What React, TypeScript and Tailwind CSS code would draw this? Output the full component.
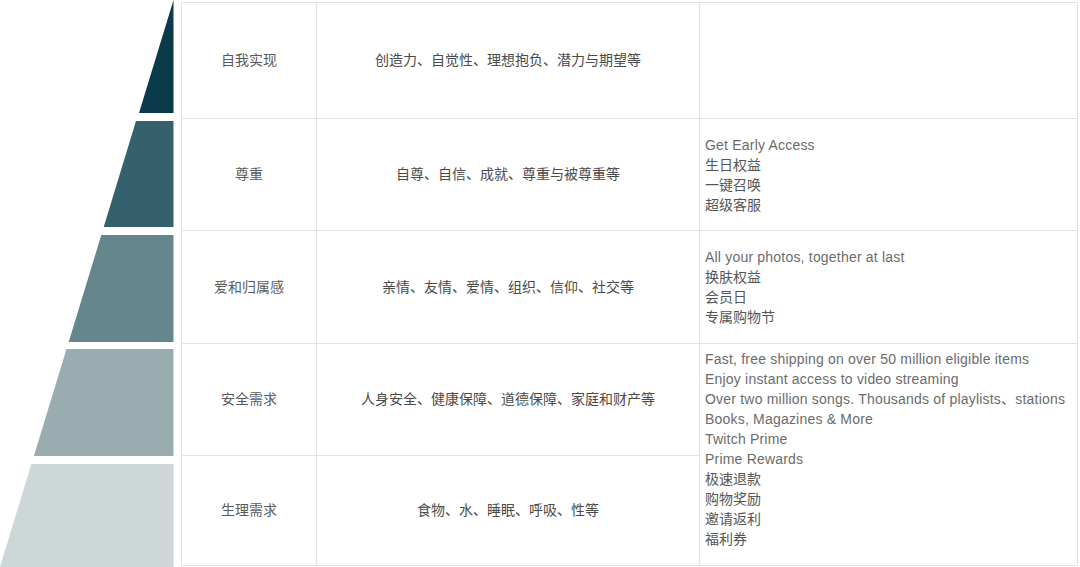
const bands = [
  { points: '173.5,0 173.5,113 139,113', fill: '#0b3a4a' },
  { points: '136,121 173.5,121 173.5,227 103.7,227', fill: '#34616c' },
  { points: '101.3,235 173.5,235 173.5,342 68.7,342', fill: '#66868d' },
  { points: '66.5,349 173.5,349 173.5,456 33.9,456', fill: '#99adb1' },
  { points: '31.4,464 173.5,464 173.5,567 0,567', fill: '#cdd7d8' },
]

const rows = [
  { need: '自我实现', items: '创造力、自觉性、理想抱负、潜力与期望等' },
  { need: '尊重', items: '自尊、自信、成就、尊重与被尊重等' },
  { need: '爱和归属感', items: '亲情、友情、爱情、组织、信仰、社交等' },
  { need: '安全需求', items: '人身安全、健康保障、道德保障、家庭和财产等' },
  { need: '生理需求', items: '食物、水、睡眠、呼吸、性等' },
]

const perks: Record<number, string[]> = {
  1: ['Get Early Access', '生日权益', '一键召唤', '超级客服'],
  2: ['All your photos, together at last', '换肤权益', '会员日', '专属购物节'],
  3: [
    'Fast, free shipping on over 50 million eligible items',
    'Enjoy instant access to video streaming',
    'Over two million songs. Thousands of playlists、stations',
    'Books, Magazines & More',
    'Twitch Prime',
    'Prime Rewards',
    '极速退款',
    '购物奖励',
    '邀请返利',
    '福利券',
  ],
}

const rowPlace = ['row-start-1', 'row-start-2', 'row-start-3', 'row-start-4', 'row-start-5']

// latin lines are set a bit looser and lighter than the chinese ones
const isLatin = (t: string) => /^[A-Za-z]/.test(t)

const Perk = ({ text }: { text: string }) => (
  <div className={isLatin(text) ? 'whitespace-nowrap tracking-[0.2px] text-[#6b6b6b]' : 'whitespace-nowrap text-[#555555]'}>
    {text}
  </div>
)

const App = () => {
  return (
    <div className="w-[1080px] h-[567px] bg-white flex items-start overflow-hidden font-['Liberation_Sans','Noto_Sans_CJK_SC',sans-serif]">
      <svg width="174" height="567" viewBox="0 0 174 567" className="shrink-0">
        {bands.map((b, i) => (
          <polygon key={i} points={b.points} fill={b.fill} />
        ))}
      </svg>
      <div className="ml-[7px] mt-[2px] grid grid-cols-[135px_383px_378px] grid-rows-[116px_112px_113px_112px_110px] border-l border-t border-[#e2e2e2]">
        {rows.map((r, i) => (
          <div key={'n' + i} className={`${rowPlace[i]} col-start-1 border-r border-b border-[#e2e2e2] flex items-center justify-center text-[14px] text-[#5a5a5a]`}>
            {r.need}
          </div>
        ))}
        {rows.map((r, i) => (
          <div key={'i' + i} className={`${rowPlace[i]} col-start-2 border-r border-b border-[#e2e2e2] flex items-center justify-center text-[14px] text-[#4a4a4a]`}>
            {r.items}
          </div>
        ))}
        <div className="row-start-1 col-start-3 border-r border-b border-[#e2e2e2]" />
        <div className="row-start-2 col-start-3 border-r border-b border-[#e2e2e2] flex flex-col justify-center pl-[5px] text-[14px] leading-[20px]">
          {perks[1].map((t) => (
            <Perk key={t} text={t} />
          ))}
        </div>
        <div className="row-start-3 col-start-3 border-r border-b border-[#e2e2e2] flex flex-col justify-center pl-[5px] text-[14px] leading-[20px]">
          {perks[2].map((t) => (
            <Perk key={t} text={t} />
          ))}
        </div>
        <div className="row-start-4 row-span-2 col-start-3 border-r border-b border-[#e2e2e2] flex flex-col pt-[5px] pl-[5px] text-[14px] leading-[20px]">
          {perks[3].map((t) => (
            <Perk key={t} text={t} />
          ))}
        </div>
      </div>
    </div>
  )
}

export default App
